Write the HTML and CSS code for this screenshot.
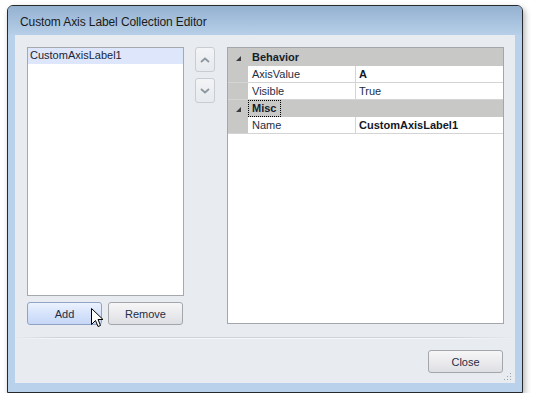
FILE: index.html
```html
<!DOCTYPE html>
<html>
<head>
<meta charset="utf-8">
<link rel="stylesheet" href="styles.css">
</head>
<body>
<div class="window">
  <div class="titlebar"><span class="title">Custom Axis Label Collection Editor</span></div>
  <div class="client">
    <div class="main">
      <div class="left">
        <div class="list">
          <div class="item selected">CustomAxisLabel1</div>
        </div>
        <div class="btnrow">
          <div class="btn hover">Add</div>
          <div class="btn">Remove</div>
        </div>
      </div>
      <div class="arrows">
        <div class="arrow"><svg width="10" height="6" viewBox="0 0 10 6"><path d="M1 5 L5 1.5 L9 5" fill="none" stroke="#8e979f" stroke-width="1.8"/></svg></div>
        <div class="arrow"><svg width="10" height="6" viewBox="0 0 10 6"><path d="M1 1 L5 4.5 L9 1" fill="none" stroke="#8e979f" stroke-width="1.8"/></svg></div>
      </div>
      <div class="grid">
        <div class="cat first">
          <span class="gutter"><svg width="5" height="5" viewBox="0 0 5 5"><polygon points="5,0 5,5 0,5" fill="#3c3c3c"/></svg></span>
          <span class="catname">Behavior</span>
        </div>
        <div class="prow">
          <span class="gutter"></span>
          <span class="pname">AxisValue</span>
          <span class="pval bold">A</span>
        </div>
        <div class="prow">
          <span class="gutter"></span>
          <span class="pname">Visible</span>
          <span class="pval">True</span>
        </div>
        <div class="cat">
          <span class="gutter"><svg width="5" height="5" viewBox="0 0 5 5"><polygon points="5,0 5,5 0,5" fill="#3c3c3c"/></svg></span>
          <span class="catname focus">Misc</span>
        </div>
        <div class="prow">
          <span class="gutter"></span>
          <span class="pname">Name</span>
          <span class="pval bold">CustomAxisLabel1</span>
        </div>
      </div>
    </div>
    <div class="sep"></div>
    <div class="footer">
      <div class="btn">Close</div>
    </div>
    <svg class="grip" width="8" height="8" viewBox="0 0 8 8">
      <rect x="6" y="0" width="1" height="1" fill="#9aa3ad"/>
      <rect x="3" y="3" width="1" height="1" fill="#9aa3ad"/>
      <rect x="6" y="3" width="1" height="1" fill="#9aa3ad"/>
      <rect x="0" y="6" width="1" height="1" fill="#9aa3ad"/>
      <rect x="3" y="6" width="1" height="1" fill="#9aa3ad"/>
      <rect x="6" y="6" width="1" height="1" fill="#9aa3ad"/>
    </svg>
  </div>
  <svg class="cursor" width="13" height="20" viewBox="0 0 13 20"><path d="M0.5 0.5 L0.5 16.5 L4.5 12.5 L7 18.5 L9.5 17.5 L7 11.5 L12 11.5 Z" fill="#fff" stroke="#000" stroke-width="1" stroke-linejoin="miter"/></svg>
</div>
</body>
</html>
```

FILE: styles.css
```css
* { box-sizing: border-box; }
html, body { margin: 0; padding: 0; background: #ffffff; }
body { font-family: "Liberation Sans", Arial, sans-serif; font-size: 11px; color: #1e2d45; }

.window {
  position: relative;
  margin: 5px 0 0 7px;
  width: 516px;
  height: 388px;
  border: 1px solid #262a2e;
  border-radius: 6px 6px 0 0;
  background: #b9d1ea;
  box-shadow: 2px 3px 6px rgba(0, 0, 0, 0.3);
  display: flex;
  flex-direction: column;
  padding: 0 7px 8px 7px;
}

.titlebar {
  height: 29px;
  margin: 0 -7px;
  padding-left: 12px;
  border-radius: 5px 5px 0 0;
  background: linear-gradient(to bottom, #94b1d0 0%, #a4bfdc 45%, #b7cfe8 100%);
  display: flex;
  align-items: center;
  padding-top: 3px;
}
.title { font-size: 12px; color: #1b1b1b; letter-spacing: -0.1px; }

.client {
  position: relative;
  width: 500px;
  height: 348px;
  background: #e8ecf0;
  display: flex;
  flex-direction: column;
  padding: 12px 0 10px 12px;
}

.main { display: flex; align-items: flex-start; }

.left { display: flex; flex-direction: column; gap: 6px; width: 157px; }
.list {
  height: 249px;
  background: #fff;
  border: 1px solid #a5a9ae;
}
.item { height: 16px; line-height: 15px; padding-left: 2px; color: #1c2436; }
.item.selected { background: #dde6fa; }

.btnrow { display: flex; gap: 6px; }
.btn {
  width: 75px;
  height: 23px;
  border: 1px solid #a3a6ab;
  border-radius: 3px;
  background: linear-gradient(to bottom, #f6f6f7 0%, #ebebee 50%, #dedfe3 100%);
  display: flex;
  align-items: center;
  justify-content: center;
  font-size: 11px;
  color: #1e2d45;
}
.btn.hover {
  border-color: #8fa4c5;
  background: linear-gradient(to bottom, #ecf2fe 0%, #d6e3fb 50%, #c6d7f6 100%);
}

.arrows { display: flex; flex-direction: column; gap: 6px; margin-left: 11px; }
.arrow {
  width: 20px;
  height: 25px;
  border: 1px solid #c9cdd2;
  border-radius: 3px;
  background: linear-gradient(to bottom, #f2f4f6, #e7eaee);
  display: flex;
  align-items: center;
  justify-content: center;
}

.grid {
  margin-left: 12px;
  width: 277px;
  height: 277px;
  border: 1px solid #a3a6ab;
  background: #fff;
  display: flex;
  flex-direction: column;
}
.gutter {
  width: 20px;
  flex: none;
  align-self: stretch;
  background: #c8c9c7;
  display: flex;
  align-items: center;
  justify-content: center;
  padding-left: 0px;
  padding-top: 1px;
}
.cat {
  height: 17px;
  background: #c8c9c7;
  display: flex;
  align-items: stretch;
}
.cat.first { height: 18px; padding-top: 1px; }
.catname {
  font-weight: bold;
  line-height: 15px;
  padding: 0 4px 0 3px;
  border: 1px solid transparent;
  color: #161d2b;
}
.catname.focus { border: 1px dotted #000; }
.prow {
  height: 17px;
  display: flex;
  border-bottom: 1px solid #d4d4d4;
}
.pname {
  width: 108px;
  padding-left: 4px;
  line-height: 17px;
  border-right: 1px solid #d4d4d4;
  color: #1e2d45;
}
.pval { flex: 1; padding-left: 3px; line-height: 17px; color: #1e2d45; }
.bold { font-weight: bold; color: #111827; }

.sep {
  margin-top: 12px;
  margin-left: -12px;
  height: 2px;
  border-top: 1px solid #cfd3d8;
  border-bottom: 1px solid #f6f7f9;
  width: 500px;
  background: none;
  -webkit-mask-image: linear-gradient(to right, transparent 0%, #000 8%, #000 88%, transparent 100%);
}

.footer {
  margin-top: 11px;
  display: flex;
  justify-content: flex-end;
  padding-right: 12px;
}

.grip { position: absolute; right: 3px; bottom: 2px; }

.cursor { position: absolute; left: 83px; top: 302px; }
```
